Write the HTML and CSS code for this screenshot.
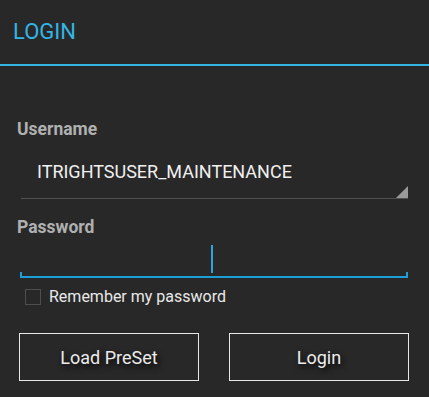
FILE: index.html
```html
<!DOCTYPE html>
<html lang="en">
<head>
    <meta charset="UTF-8">
    <meta name="viewport" content="width=device-width, initial-scale=1.0">
    <title>Login</title>
    <link rel="stylesheet" href="styles.css">
</head>
<body>
    <div class="header">
        <h1>LOGIN</h1>
    </div>

    <div class="form">
        <div class="label label-user">Username</div>
        <div class="spinner">
            <span>ITRIGHTSUSER_MAINTENANCE</span>
            <span class="spinner-arrow"></span>
        </div>

        <div class="label label-pass">Password</div>
        <div class="field">
            <span class="cursor"></span>
        </div>

        <label class="remember">
            <span class="checkbox"></span>
            <span>Remember my password</span>
        </label>

        <div class="buttons">
            <button>Load PreSet</button>
            <button>Login</button>
        </div>
    </div>
</body>
</html>
```

FILE: styles.css
```css
body {
    margin: 0;
    background-color: #282828;
    font-family: Roboto, "Liberation Sans", sans-serif;
    color: #f0f0f0;
}

.header {
    height: 64px;
    border-bottom: 2px solid #33b5e5;
    padding-left: 13px;
}

.header h1 {
    margin: 0;
    padding-top: 19px;
    font-size: 22px;
    line-height: 26px;
    font-weight: normal;
    color: #33b5e5;
}

.form {
    padding: 0 20px 0 17px;
}

.label {
    font-size: 17.5px;
    line-height: 20px;
    font-weight: bold;
    color: #b0b0b0;
}

.label-user {
    margin-top: 53px;
}

.label-pass {
    margin-top: 18px;
}

.spinner {
    position: relative;
    margin: 0 1px 0 4px;
    padding: 22px 0 15px 16px;
    font-size: 18px;
    line-height: 22px;
    border-bottom: 1px solid #505050;
}

.spinner-arrow {
    position: absolute;
    right: 0;
    bottom: 0;
    width: 12px;
    height: 12px;
    background-color: #9a9a9a;
    clip-path: polygon(100% 0, 100% 100%, 0 100%);
}

.field {
    position: relative;
    height: 39px;
    margin: 0 1px 0 3px;
    border-bottom: 2px solid #1d9ed6;
    display: flex;
    justify-content: center;
}

.field::before,
.field::after {
    content: "";
    position: absolute;
    bottom: 0;
    width: 2px;
    height: 4px;
    background-color: #1d9ed6;
}

.field::before {
    left: 0;
}

.field::after {
    right: 0;
}

.cursor {
    width: 2px;
    height: 28px;
    margin-top: 8px;
    margin-right: 4px;
    background-color: #33a3dc;
}

.remember {
    display: flex;
    align-items: center;
    gap: 8px;
    margin: 11px 0 0 8px;
    font-size: 16px;
    line-height: 16px;
    color: #e8e8e8;
}

.checkbox {
    width: 14px;
    height: 14px;
    border: 1px solid #4e4e4e;
}

.buttons {
    display: flex;
    gap: 30px;
    margin: 28px 0 0 2px;
}

.buttons button {
    width: 180px;
    height: 48px;
    border: 1px solid #e6e6e6;
    background-color: transparent;
    color: #ececec;
    font-family: Roboto, "Liberation Sans", sans-serif;
    font-size: 18px;
    text-shadow: 2px 3px 6px #000;
    cursor: pointer;
}
```
